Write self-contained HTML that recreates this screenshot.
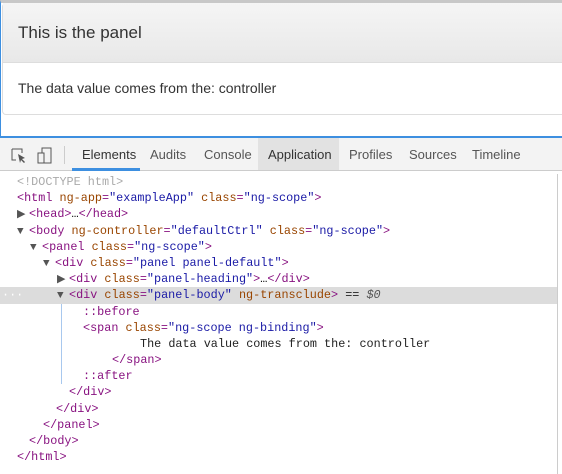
<!DOCTYPE html>
<html><head><style>
*{margin:0;padding:0;box-sizing:border-box}
body{width:562px;height:470px;overflow:hidden;background:#fff;font-family:"Liberation Sans",sans-serif;position:relative}
.top{position:absolute;left:0;top:0;width:562px;height:138px;border-left:1px solid #3d8fe0;border-bottom:2px solid #3d8fe0;border-top:3px solid #c8c8c8}
.panel{position:absolute;left:1px;top:0;width:570px;height:112px;border:1px solid #ddd;border-radius:4px;border-top:none}
.ph{height:60px;background:linear-gradient(#f5f5f5,#e8e8e8);border-bottom:1px solid #ddd;font-size:17px;color:#333;padding:20px 0 0 15px}
.pb{font-size:14px;color:#333;padding:17px 0 0 15px}
.tb{position:absolute;top:138px;left:0;width:562px;height:33px;background:#f3f3f3;border-bottom:1px solid #ccc;font-size:13px;color:#333}
.tab{position:absolute;top:9px}
.code{position:absolute;top:174px;left:0;width:558px;font-family:"Liberation Mono",monospace;font-size:11.8px;border-right:1px solid #ccc;height:300px}
.l{height:16.2px;line-height:16.2px;white-space:pre;position:relative}
.t{color:#881280}.a{color:#994500}.v{color:#1a1aa6}.g{color:#aaa}.k{color:#222}
.tri{font-size:11px;color:#555;display:inline-block;width:12px}
</style></head><body>
<div class="top"><div class="panel"><div class="ph">This is the panel</div><div class="pb">The data value comes from the: controller</div></div></div>
<div class="tb">
<svg style="position:absolute;left:11px;top:10px" width="16" height="16"><path d="M1 1h10v4M1 1v11h4" fill="none" stroke="#555"/><path d="M7 6l7 4-3 1 3 3-1 1-3-3-1 3z" fill="#555"/></svg>
<svg style="position:absolute;left:37px;top:9px" width="16" height="17"><rect x="5" y="1" width="9" height="15" fill="none" stroke="#555"/><rect x="1" y="6" width="6" height="10" fill="#f3f3f3" stroke="#555"/></svg>
<div style="position:absolute;left:64px;top:8px;width:1px;height:18px;background:#ccc"></div>
<span class="tab" style="left:82px">Elements</span>
<div style="position:absolute;left:72px;top:30px;width:68px;height:3px;background:#3d8fe0"></div>
<span class="tab" style="left:150px;color:#555">Audits</span>
<span class="tab" style="left:204px;color:#555">Console</span>
<div style="position:absolute;left:258px;top:0;width:81px;height:32px;background:#e2e2e2"></div>
<span class="tab" style="left:268px">Application</span>
<span class="tab" style="left:349px;color:#555">Profiles</span>
<span class="tab" style="left:409px;color:#555">Sources</span>
<span class="tab" style="left:472px;color:#555">Timeline</span>
</div>
<div class="code">
<div class="l" style="padding-left:17px"><span class="g">&lt;!DOCTYPE html&gt;</span></div>
<div class="l" style="padding-left:17px"><span class="t">&lt;html</span> <span class="a">ng-app</span><span class="t">=</span><span class="v">"exampleApp"</span> <span class="a">class</span><span class="t">=</span><span class="v">"ng-scope"</span><span class="t">&gt;</span></div>
<div class="l" style="padding-left:17px"><span class="tri">▶</span><span class="t">&lt;head&gt;</span>…<span class="t">&lt;/head&gt;</span></div>
<div class="l" style="padding-left:17px"><span class="tri">▼</span><span class="t">&lt;body</span> <span class="a">ng-controller</span><span class="t">=</span><span class="v">"defaultCtrl"</span> <span class="a">class</span><span class="t">=</span><span class="v">"ng-scope"</span><span class="t">&gt;</span></div>
<div class="l" style="padding-left:30px"><span class="tri">▼</span><span class="t">&lt;panel</span> <span class="a">class</span><span class="t">=</span><span class="v">"ng-scope"</span><span class="t">&gt;</span></div>
<div class="l" style="padding-left:43px"><span class="tri">▼</span><span class="t">&lt;div</span> <span class="a">class</span><span class="t">=</span><span class="v">"panel panel-default"</span><span class="t">&gt;</span></div>
<div class="l" style="padding-left:57px"><span class="tri">▶</span><span class="t">&lt;div</span> <span class="a">class</span><span class="t">=</span><span class="v">"panel-heading"</span><span class="t">&gt;</span>…<span class="t">&lt;/div&gt;</span></div>
<div class="l" style="padding-left:57px;background:#dcdcdc"><span style="position:absolute;left:2px;color:#fff">···</span><span class="tri">▼</span><span class="t">&lt;div</span> <span class="a">class</span><span class="t">=</span><span class="v">"panel-body"</span> <span class="a">ng-transclude</span><span class="t">&gt;</span> <span class="k">==</span> <i class="k" style="color:#555">$0</i></div>
<div class="l" style="padding-left:83px"><span class="t">::before</span></div>
<div class="l" style="padding-left:83px"><span class="t">&lt;span</span> <span class="a">class</span><span class="t">=</span><span class="v">"ng-scope ng-binding"</span><span class="t">&gt;</span></div>
<div class="l" style="padding-left:140px"><span class="k">The data value comes from the: controller</span></div>
<div class="l" style="padding-left:112px"><span class="t">&lt;/span&gt;</span></div>
<div class="l" style="padding-left:83px"><span class="t">::after</span></div>
<div class="l" style="padding-left:69px"><span class="t">&lt;/div&gt;</span></div>
<div class="l" style="padding-left:56px"><span class="t">&lt;/div&gt;</span></div>
<div class="l" style="padding-left:43px"><span class="t">&lt;/panel&gt;</span></div>
<div class="l" style="padding-left:29px"><span class="t">&lt;/body&gt;</span></div>
<div class="l" style="padding-left:17px"><span class="t">&lt;/html&gt;</span></div>
<div style="position:absolute;left:61px;top:130px;width:1px;height:80px;background:#a8c8ee"></div>
</div>
</body></html>
